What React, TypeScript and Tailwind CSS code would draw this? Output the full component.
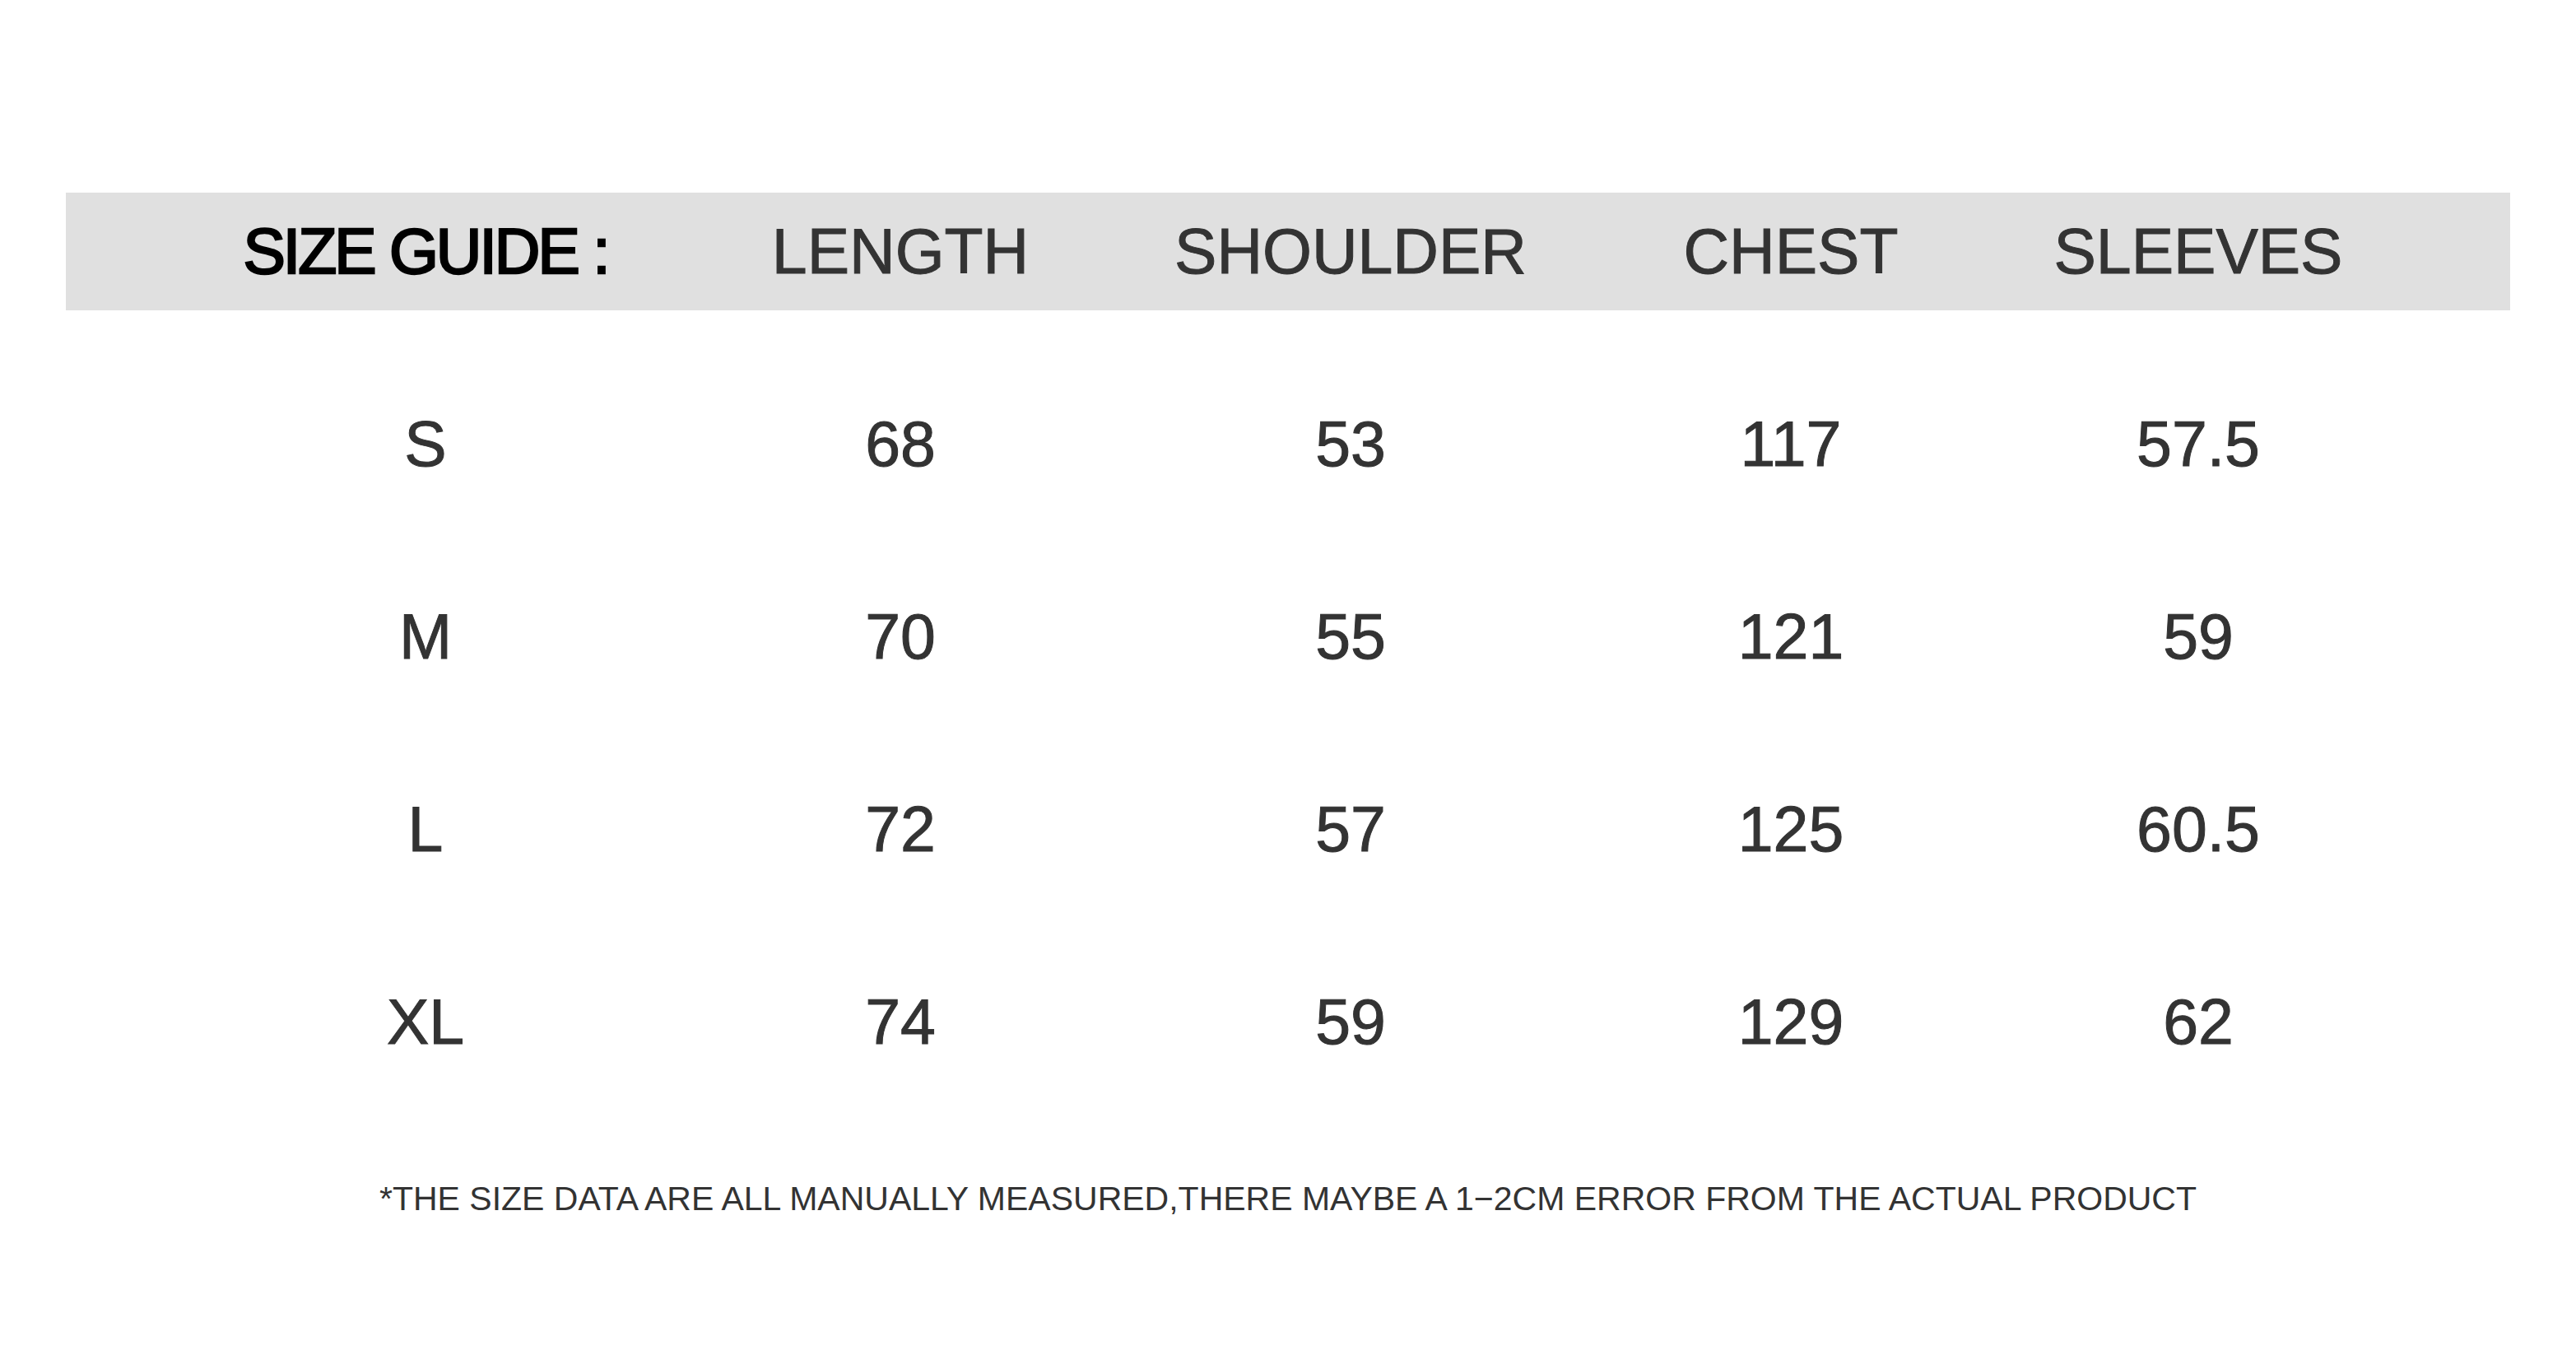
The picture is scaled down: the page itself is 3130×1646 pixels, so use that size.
import React from 'react'

const cols = 'grid grid-cols-[874px_280px_814px_256px_734px]'

const rows = [
  ['S', '68', '53', '117', '57.5'],
  ['M', '70', '55', '121', '59'],
  ['L', '72', '57', '125', '60.5'],
  ['XL', '74', '59', '129', '62'],
]

function Cell({ children, className = '' }: { children: React.ReactNode; className?: string }) {
  return (
    <div className={`flex justify-center items-center whitespace-nowrap ${className}`}>
      {children}
    </div>
  )
}

export default function App() {
  return (
    <div
      className="w-[3130px] h-[1646px] bg-white pt-[234px] px-[80px] text-[#333333]"
      style={{ fontFamily: '"Liberation Sans", Arial, sans-serif' }}
    >
      {/* header band */}
      <div className={`${cols} h-[143px] bg-[#e0e0e0] text-[77px] [-webkit-text-stroke:1px_#333333]`}>
        <Cell className="text-black tracking-[-3px] [-webkit-text-stroke:2.5px_#000000]">SIZE GUIDE :</Cell>
        <Cell>LENGTH</Cell>
        <Cell>SHOULDER</Cell>
        <Cell>CHEST</Cell>
        <Cell>SLEEVES</Cell>
      </div>

      {/* size rows */}
      <div className="mt-[46px] [-webkit-text-stroke:1px_#333333]">
        {rows.map((r) => (
          <div key={r[0]} className={`${cols} h-[234px] text-[77px]`}>
            {r.map((v, i) => (
              <Cell key={i}>{v}</Cell>
            ))}
          </div>
        ))}
      </div>

      <div className="-mx-[80px] mt-[77px] flex justify-center text-[41px] leading-[41px] whitespace-nowrap">
        *THE SIZE DATA ARE ALL MANUALLY MEASURED,THERE MAYBE A 1−2CM ERROR FROM THE ACTUAL PRODUCT
      </div>
    </div>
  )
}
